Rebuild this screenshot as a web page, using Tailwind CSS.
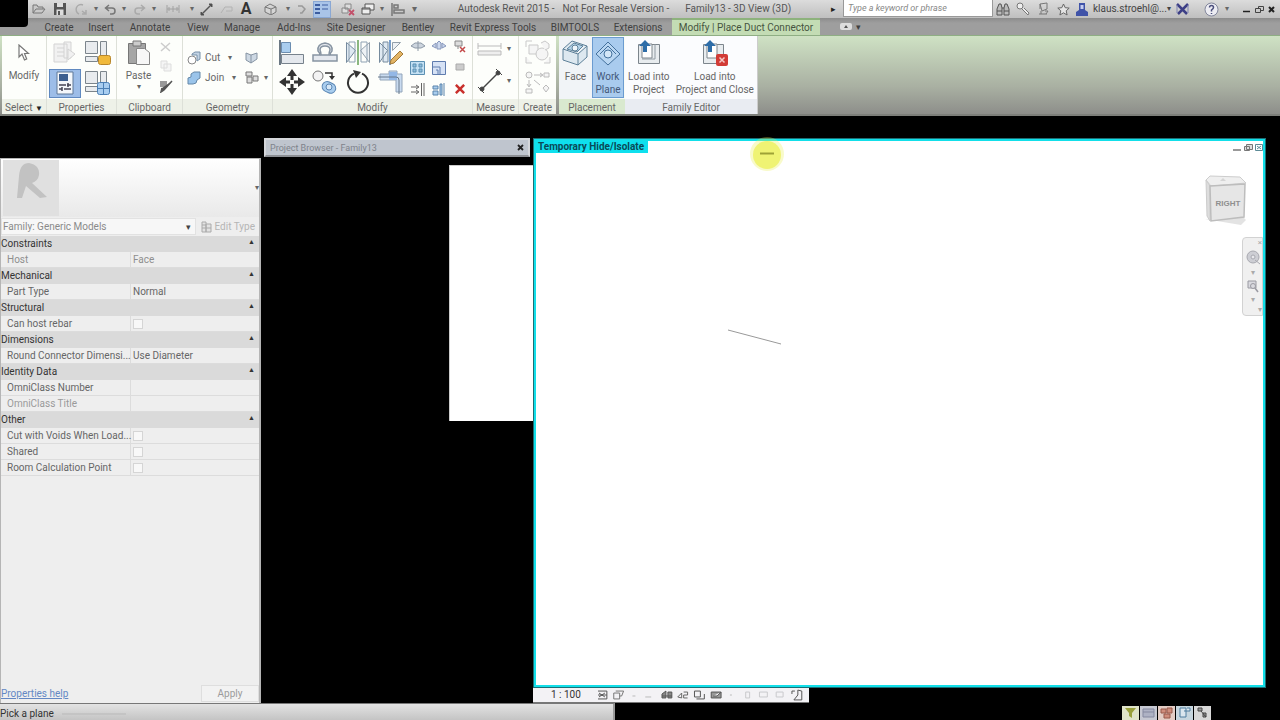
<!DOCTYPE html>
<html lang="en">
  <head>
    <meta charset="UTF-8" />
    <meta name="viewport" content="width=device-width, initial-scale=1.0" />
    <script src="https://cdn.jsdelivr.net/npm/@tailwindcss/browser@4"></script>
    <title>Autodesk Revit 2015</title>
  </head>
  <body
    class="min-h-screen flex flex-col bg-black font-['Roboto','Noto_Sans',sans-serif] text-[10px] leading-4 text-[#666] overflow-hidden"
  >
    <!-- Title bar -->
    <header class="bg-[#9b9b9b]">
      <div class="flex">
        <div class="w-7 h-[27px] -mb-[9px] bg-black rounded-br-sm shrink-0 z-10"></div>
        <div class="flex-1 h-[18px] flex items-center bg-linear-to-b from-[#dcdcdc] to-[#bfbfbf]">
          <nav class="flex items-center h-full shrink-0" aria-label="Quick access">
            <button class="w-[22px] flex justify-center" aria-label="Open">
              <svg width="14" height="12" viewBox="0 0 14 12" fill="#c9c9c9" stroke="#777"><path d="M1 10V2h4l1 2h5v2M1 10l3-4h9l-3 4z" /></svg>
            </button>
            <button class="w-5 flex justify-center" aria-label="Save">
              <svg width="12" height="12" viewBox="0 0 12 12"><path d="M0 0h12v12H0z" fill="#555" /><path d="M3 0h6v4H3zM2.5 6.500h7V12h-7z" fill="#ddd" /><path d="M4 8h2v4H4z" fill="#555" /></svg>
            </button>
            <button class="w-[22px] flex justify-center" aria-label="Synchronize">
              <svg width="14" height="13" viewBox="0 0 14 13" fill="none" stroke="#aaa" stroke-width="1.500"><path d="M9 2a4.500 4.500 0 1 0-4 9M8 8l4 3m0-4v4H8" /></svg>
            </button>
            <span class="w-2 text-[8px] text-center">▾</span>
            <button class="w-5 flex justify-center" aria-label="Undo">
              <svg width="13" height="11" viewBox="0 0 13 11" fill="none" stroke="#777" stroke-width="1.500"><path d="M5 1L1.500 4 5 7M2 4h6a3 3 0 0 1 0 6H6" /></svg>
            </button>
            <span class="w-2 text-[8px] text-center">▾</span>
            <button class="w-[22px] flex justify-center" aria-label="Redo">
              <svg width="13" height="11" viewBox="0 0 13 11" fill="none" stroke="#aaa" stroke-width="1.500"><path d="M8 1l3.500 3L8 7M11 4H5a3 3 0 0 0 0 6h2" /></svg>
            </button>
            <span class="w-2 text-[8px] text-center">▾</span>
            <button class="w-[30px] flex justify-center" aria-label="Align dimension">
              <svg width="14" height="8" viewBox="0 0 14 8" fill="none" stroke="#a2a2a2"><path d="M1 0v8M13 0v8M1 4h12M7 1v6M3 2v4M11 2v4" /></svg>
            </button>
            <span class="w-2 text-[8px] text-center">▾</span>
            <button class="w-5 flex justify-center" aria-label="Measure">
              <svg width="13" height="13" viewBox="0 0 13 13" stroke="#555" fill="#444"><path d="M2 11L11 2" stroke-width="1.500" /><path d="M1 9l3 3H1zM9 1h3v3z" /></svg>
            </button>
            <button class="w-5 flex justify-center" aria-label="Tag">
              <svg width="13" height="10" viewBox="0 0 13 10" fill="none" stroke="#b2b2b2"><path d="M1 9l4-6h7v4H6" /></svg>
            </button>
            <button class="w-5 text-base leading-4 font-bold text-[#333]" aria-label="Text">A</button>
            <button class="w-7 flex justify-center" aria-label="Default 3D view">
              <svg width="13" height="12" viewBox="0 0 13 12" fill="#d5d5d5" stroke="#777"><path d="M1 4l5-3 6 3v5l-5 3-6-3zM1 4l6 2 5-2M7 6v6" /></svg>
            </button>
            <span class="w-2 text-[8px] text-center">▾</span>
            <button class="w-5 flex justify-center" aria-label="Section">
              <svg width="10" height="12" viewBox="0 0 10 12" fill="none" stroke="#999" stroke-width="1.500"><path d="M1 3h4l3 3-3 4H3" /></svg>
            </button>
            <button class="w-[18px] mx-px h-[17px] bg-[#a9c4e8] border border-[#8aa8d4] flex items-center justify-center" aria-label="Thin lines">
              <svg width="14" height="12" viewBox="0 0 14 12" fill="#3c5da0"><path d="M0 1h5v2H0zM0 5h5v2H0zM0 9h5v2H0zM7 1.500h6v1H7zM7 5.500h6v1H7z" /></svg>
            </button>
            <button class="w-5 ml-1.5 flex justify-center" aria-label="Close hidden windows">
              <svg width="14" height="13" viewBox="0 0 14 13" fill="#ddd" stroke="#888"><path d="M4 1h6v5H4zM1 5h6v5H1z" /><path d="M8 7l5 5M13 7l-5 5" stroke="#c2506a" stroke-width="1.800" /></svg>
            </button>
            <button class="w-5 flex justify-center" aria-label="Switch windows">
              <svg width="14" height="13" viewBox="0 0 14 13" fill="#eee" stroke="#555"><path d="M4 1h9v6H4z" /><path d="M1 5h8v6H1zM1 6h8" /></svg>
            </button>
            <span class="w-2 text-[8px] text-center">▾</span>
            <button class="w-6 flex justify-center" aria-label="Align">
              <svg width="14" height="13" viewBox="0 0 14 13" fill="none" stroke="#777" stroke-width="1.500"><path d="M1 0v13M3 2h4v3H3zM3 7h10v3H3z" /></svg>
            </button>
            <span class="w-2 text-[10px] text-center">▾</span>
          </nav>
          <h1 class="flex-1 flex justify-center gap-2 whitespace-nowrap text-[#555]">
            <span>Autodesk Revit 2015 -</span><span>Not For Resale Version -</span><span class="pl-2">Family13 - 3D View (3D)</span>
          </h1>
          <div class="flex items-center h-full shrink-0">
            <span class="w-3 text-[9px] text-[#222]">▸</span>
            <input
              type="text"
              aria-label="Search"
              placeholder="Type a keyword or phrase"
              class="w-[150px] h-[17px] mb-px bg-white border border-t-0 border-[#999] px-1 text-[9px] italic placeholder:text-[#888]"
            />
            <button class="w-5 flex justify-center" aria-label="Find">
              <svg width="14" height="14" viewBox="0 0 14 14" fill="#bbb" stroke="#555"><path d="M1 13V7l2-5h2l1 4v7zM8 13V6l1-4h2l2 5v6zM6 6h2M1 9h5M8 9h5" /></svg>
            </button>
            <button class="w-5 flex justify-center" aria-label="Subscription">
              <svg width="14" height="14" viewBox="0 0 14 14" fill="#eee" stroke="#777"><circle cx="4" cy="4" r="3" /><path d="M6 7l6 6 1-2-5-5" /></svg>
            </button>
            <button class="w-5 flex justify-center" aria-label="Communication center">
              <svg width="13" height="14" viewBox="0 0 13 14" fill="none" stroke="#777"><path d="M3 2l7-1v6l-5 2zM2 12h8M4 12V9M9 12l2-3H8M3 2v5" /></svg>
            </button>
            <button class="w-5 flex justify-center" aria-label="Favorites">
              <svg width="13" height="13" viewBox="0 0 13 13" fill="#e5e5e5" stroke="#666"><path d="M6.500 1l1.700 3.700 4 .4-3 2.700.9 4.200-3.600-2.200L2.900 12l.9-4.200-3-2.700 4-.4z" /></svg>
            </button>
            <button class="w-[94px] flex items-center pl-0.5 text-[#444] whitespace-nowrap">
              <svg class="mr-1 shrink-0" width="14" height="14" viewBox="0 0 14 14"><path d="M4 1h6v7l3 2v4H1v-4l3-2z" fill="#4053a8" /><path d="M5.500 3h3v4h-3z" fill="#c5cdf0" /></svg>
              klaus.stroehl@...
              <span class="text-[8px]">▾</span>
            </button>
            <button class="w-[30px] flex justify-center" aria-label="Exchange">
              <svg width="13" height="12" viewBox="0 0 13 12" stroke-width="2.500" fill="none"><path d="M1 1l10 10M12 1L2 11" stroke="#3d3f86" /><path d="M1 2v8M12 2v8" stroke="#7f83b5" stroke-width="1" /></svg>
            </button>
            <button class="w-7 flex justify-center" aria-label="Help">
              <svg width="15" height="15" viewBox="0 0 15 15" fill="#ececf2" stroke="#83879c"><circle cx="7.500" cy="7.500" r="6.500" /><path d="M5.500 5.500q0-2 2-2t2 2q0 1-2 2.500v1.500M7.500 11v1" fill="none" stroke="#4b4f7c" stroke-width="1.500" /></svg>
            </button>
            <span class="w-3.5 text-[8px]">▾</span>
            <div class="flex gap-1 px-1">
              <button aria-label="Minimize"><svg width="8" height="9" viewBox="0 0 8 9" stroke="#222" stroke-width="1.500"><path d="M0 6.500h7" /></svg></button>
              <button aria-label="Restore"><svg width="9" height="9" viewBox="0 0 9 9" fill="none" stroke="#444"><path d="M3.500 3V1.500h5v4H6M.5 3.500h5v4h-5z" /></svg></button>
              <button aria-label="Close"><svg width="8" height="9" viewBox="0 0 8 9" stroke="#222" stroke-width="2"><path d="M1 2l5 5M6 2L1 7" /></svg></button>
            </div>
          </div>
        </div>
      </div>

      <!-- Ribbon tabs -->
      <nav class="flex h-[18px] pl-[38px] border-b border-[#8fae84] text-[#404040] bg-linear-to-b from-[#8c8c8c] to-[#9e9e9e] to-30% [&>button]:shrink-0 [&>button]:leading-5 whitespace-nowrap" aria-label="Ribbon tabs">
        <button class="w-[42px]">Create</button>
        <button class="w-[42px]">Insert</button>
        <button class="w-14">Annotate</button>
        <button class="w-10">View</button>
        <button class="w-12">Manage</button>
        <button class="w-14">Add-Ins</button>
        <button class="w-[68px]">Site Designer</button>
        <button class="w-14">Bentley</button>
        <button class="w-[94px]">Revit Express Tools</button>
        <button class="w-[70px]">BIMTOOLS</button>
        <button class="w-14">Extensions</button>
        <button class="w-[148px] ml-1.5 bg-[#c3dcb4] border-t-2 border-[#8db27c] text-[#46543f] leading-4!">Modify | Place Duct Connector</button>
        <button class="flex items-center gap-1 ml-5 text-[9px]" aria-label="Ribbon display">
          <svg width="12" height="7" viewBox="0 0 12 7"><rect width="12" height="7" rx="2" fill="#ddd" /><path d="M4 5l2-3 2 3z" fill="#555" /></svg>▾
        </button>
      </nav>

      <!-- Ribbon panels -->
      <div class="flex h-20 pl-0.5 border-b-2 border-[#7d7f7a] bg-linear-to-b from-[#cfe2c4] via-[#a9b0a2] via-65% to-[#8d8e8a] whitespace-nowrap [&>section]:shrink-0 [&_h2]:h-[15px] [&_h2]:leading-[17px] [&_h2]:text-center">
        <section class="w-[45px] flex flex-col bg-[#fdfefb] border-r border-[#dde0d8]">
          <button class="flex-1 flex flex-col items-center pt-2">
            <svg width="12" height="18" viewBox="0 0 12 18" fill="#fff" stroke="#777" stroke-width="1.200"><path d="M1 1v12l3-3 2.500 6 2.200-1L6.500 9.500h4z" /></svg>
            <span class="pt-1.5">Modify</span>
          </button>
          <h2 class="bg-[#eef1e8]">Select <span class="text-[8px] text-[#222]">▼</span></h2>
        </section>
        <section class="w-[70px] flex flex-col bg-[#fdfefb] border-r border-[#dde0d8]">
          <div class="flex-1 grid grid-cols-2 place-items-center px-0.5 pt-0.5">
            <button aria-label="Family category">
              <svg width="26" height="26" viewBox="0 0 26 26" fill="#f1f1f1" stroke="#d3d3d3"><path d="M2 4h13v18H2zM5 8h7M5 12h7M5 16h7M12 2h7v16h-7z" /><path d="M16 9l7 5-7 6z" /></svg>
            </button>
            <button aria-label="Family types">
              <svg width="28" height="26" viewBox="0 0 28 26"><path d="M1.500 1.500h12v12h-12zM16.500 1.500h6v18h-6zM1.500 16.500h12v5h-12z" fill="#e8ebee" stroke="#7c858c" /><rect x="14.500" y="15.500" width="12" height="9" rx="2" fill="#f0b93c" stroke="#b8862b" /></svg>
            </button>
            <button class="w-8 h-[29px] bg-[#9dbde8] border border-[#6089c0] flex items-center justify-center" aria-label="Properties">
              <svg width="18" height="24" viewBox="0 0 18 24"><path d="M1 1h16v22H1z" fill="#f4f7fb" stroke="#5e7898" /><path d="M3 3h9v7H3z" fill="#3d5f90" /><path d="M3 14h7M11 14h4M3 18h3M8 18h7M12 12v4M6 16v4" stroke="#445" stroke-width="1.500" /></svg>
            </button>
            <button aria-label="Family types table">
              <svg width="28" height="26" viewBox="0 0 28 26"><path d="M1.500 1.500h12v12h-12zM16.500 1.500h6v18h-6zM1.500 16.500h12v5h-12z" fill="#e8ebee" stroke="#7c858c" /><rect x="13.500" y="12.500" width="12" height="12" rx="2" fill="#a8cdf0" stroke="#4b7fb5" /><path d="M19.500 13v11M14 18.500h11" stroke="#4b7fb5" /></svg>
            </button>
          </div>
          <h2 class="bg-[#eef1e8]">Properties</h2>
        </section>
        <section class="w-[66px] flex flex-col bg-[#fdfefb] border-r border-[#dde0d8]">
          <div class="flex-1 flex justify-center gap-2">
            <button class="flex flex-col items-center pt-1">
              <svg width="24" height="26" viewBox="0 0 24 26"><path d="M1.500 3.500h17v20h-17z" fill="#a5a5a5" stroke="#777" /><path d="M6 1h8v5H6z" fill="#ccc" stroke="#777" /><path d="M9.500 8.500h8l5 4v12h-13z" fill="#f7f7f7" stroke="#888" /></svg>
              <span class="pt-0.5">Paste</span>
              <span class="text-[8px] leading-[5px]">▾</span>
            </button>
            <div class="flex flex-col justify-between items-center py-1.5">
              <button aria-label="Cut to clipboard"><svg width="12" height="10" viewBox="0 0 12 10" stroke="#ccc" stroke-width="1.500"><path d="M1 1l9 8M10 1L1 9" /></svg></button>
              <button aria-label="Copy to clipboard"><svg width="12" height="12" viewBox="0 0 12 12" fill="#f5f5f5" stroke="#ddd"><path d="M1 1h6v7H1zM4 4h7v7H4z" /></svg></button>
              <button aria-label="Match type"><svg width="14" height="14" viewBox="0 0 14 14"><path d="M1 2h7v6H1z" fill="#999" /><path d="M13 2L5 11l-3 2 1-4" fill="#555" stroke="#555" stroke-width="1.500" /></svg></button>
            </div>
          </div>
          <h2 class="bg-[#eef1e8]">Clipboard</h2>
        </section>
        <section class="w-[90px] flex flex-col bg-[#fdfefb] border-r border-[#dde0d8]">
          <div class="flex-1 grid grid-cols-[54px_1fr] content-center gap-y-1 pl-1 [&>button]:flex [&>button]:items-center [&>button]:gap-1">
            <button>
              <svg width="14" height="14" viewBox="0 0 14 14"><circle cx="5" cy="9" r="4" fill="#fff" stroke="#888" /><path d="M5 3l3-2h5v7l-3 2V4H5z" fill="#c2d3e4" stroke="#7790a8" /></svg>
              Cut <span class="pl-1 text-[8px]">▾</span>
            </button>
            <button aria-label="Wall opening" class="pl-1"><svg width="14" height="14" viewBox="0 0 14 14" fill="#cdd8e3" stroke="#8694a3"><path d="M1 2l5 2v8L1 9zM6 4l6-2v6l-6 4" /></svg></button>
            <button>
              <svg width="14" height="14" viewBox="0 0 14 14" fill="#9ac4ea" stroke="#6488a8"><path d="M1 7l3-1V3l3-2h6v6l-3 2-1 3-3 1H1z" /></svg>
              Join <span class="pl-1 text-[8px]">▾</span>
            </button>
            <button aria-label="Split face" class="pl-1"><svg width="15" height="14" viewBox="0 0 15 14" fill="#ddd" stroke="#777"><path d="M1 1h6v4H1zM2 6h5v6H2zM8 5h5v5H8z" /></svg><span class="text-[8px]">▾</span></button>
          </div>
          <h2 class="bg-[#eef1e8]">Geometry</h2>
        </section>
        <section class="w-[200px] flex flex-col bg-[#fdfefb] border-r border-[#dde0d8]">
          <div class="flex-1 flex items-center">
            <div class="grid grid-cols-4 w-[134px] pl-0.5 gap-y-1 place-items-center">
              <button aria-label="Align"><svg width="26" height="25" viewBox="0 0 26 25"><path d="M1 0v25" stroke="#6b7884" stroke-width="2" /><path d="M2.500 2.500h9v10h-9z" fill="#a9cdee" stroke="#6b8db0" /><path d="M2.500 14.500h22v9h-22z" fill="#e4e8ed" stroke="#77828c" /></svg></button>
              <button aria-label="Offset"><svg width="26" height="25" viewBox="0 0 26 25" fill="none" stroke="#8794a2" stroke-width="1.500"><path d="M1 15h7q0-2-2-4-1-7 7-8 8 1 7 8-2 2-2 4h7v6H1z" fill="#e4e8ee" /><path d="M9 15q0-3-1-5 0-4 5-4t5 4q-1 2-1 5z" fill="#fdfefb" /></svg></button>
              <button aria-label="Mirror pick axis"><svg width="26" height="25" viewBox="0 0 26 25"><path d="M1.500 2.500l9 8-9 12z" fill="#dfe9f2" stroke="#768b9e" /><path d="M24.500 2.500l-9 8 9 12z" fill="#eef2f5" stroke="#93a0ab" /><path d="M4 2h6v20H4zM16 2h6v20h-6z" fill="none" stroke="#8fa2b3" /><path d="M13 0v25" stroke="#65a057" stroke-width="1.500" /></svg></button>
              <button aria-label="Mirror draw axis"><svg width="26" height="25" viewBox="0 0 26 25"><path d="M1.500 2.500l8 8-8 12zM5 2h5v20H5z" fill="#dfe9f2" stroke="#768b9e" /><path d="M22.500 2.500l-8 8v-8z" fill="#eef2f5" stroke="#93a0ab" /><path d="M12 0v25" stroke="#4d7fbd" stroke-width="1.500" /><path d="M22 11l3 3-9 9-4 1 1-4z" fill="#e2b464" stroke="#a37a38" /></svg></button>
              <button aria-label="Move"><svg width="26" height="26" viewBox="0 0 26 26" fill="#333"><path d="M13 0l5 7h-3.500v4h-3V7H8zM13 26l5-7h-3.500v-4h-3v4H8zM0 13l7-5v3.500h4v3H7V18zM26 13l-7-5v3.500h-4v3h4V18z" /></svg></button>
              <button aria-label="Copy"><svg width="26" height="26" viewBox="0 0 26 26"><circle cx="6" cy="7" r="5" fill="#f3f3f3" stroke="#777" /><path d="M13 4h7v4" fill="none" stroke="#333" stroke-width="1.500" /><path d="M17 7h6l-3 4z" fill="#333" /><rect x="10" y="13" width="14" height="10" rx="5" transform="rotate(25 16 18)" fill="#a9cdee" stroke="#5b87b5" /><circle cx="17" cy="18" r="3" fill="#d5e7f7" stroke="#5b87b5" /></svg></button>
              <button aria-label="Rotate"><svg width="26" height="26" viewBox="0 0 26 26"><path d="M9 4.600A10 10 0 1 0 17 4.600" fill="none" stroke="#333" stroke-width="2" /><path d="M8 1l8 2-5 6z" fill="#333" /></svg></button>
              <button aria-label="Trim"><svg width="26" height="26" viewBox="0 0 26 26"><path d="M2 5h9V2h8v3h5v18h-6V11H2z" fill="#c9dbf0" stroke="#93a5ba" /><path d="M11 3h8v8h-8z" fill="#93b7e6" /><path d="M0 8h18q3 0 3 3v14" fill="none" stroke="#66788c" /></svg></button>
            </div>
            <div class="grid grid-cols-3 w-[64px] gap-y-2 place-items-center">
              <button aria-label="Split"><svg width="14" height="12" viewBox="0 0 14 12" fill="#cdd5de" stroke="#8d99a6"><path d="M0 6l4-3h6l4 3-4 2H4zM7 1v10" /></svg></button>
              <button aria-label="Split with gap"><svg width="14" height="12" viewBox="0 0 14 12" fill="#cdd9ee" stroke="#8797bb"><path d="M0 6l4-3v5zM14 6l-4-3v5zM5 3l2-2 2 2v6H5z" /></svg></button>
              <button aria-label="Unpin"><svg width="12" height="13" viewBox="0 0 12 13" fill="#ddd" stroke="#888"><path d="M1 1h7v5H1zM4 6v3" /><path d="M6 7l5 5M11 7l-5 5" stroke="#c44a4a" stroke-width="1.500" /></svg></button>
              <button aria-label="Array"><svg width="15" height="14" viewBox="0 0 15 14" fill="#c3e0f3" stroke="#5c90b2"><path d="M.5.5h14v13H.5z" /><path d="M3 3h3v3H3zM9 3h3v3H9zM3 8h3v3H3zM9 8h3v3H9z" fill="#8dbedd" /></svg></button>
              <button aria-label="Scale"><svg width="14" height="14" viewBox="0 0 14 14" fill="#d6e2f5" stroke="#5f7cae"><path d="M.5.5h13v13H.5zM1 6h7v7M4 9h2v4" /></svg></button>
              <button aria-label="Pin"><svg width="10" height="9" viewBox="0 0 10 9" fill="#ccc" stroke="#aaa"><path d="M1 1h8v6H1z" /></svg></button>
              <button aria-label="Trim single"><svg width="14" height="13" viewBox="0 0 14 13" fill="none" stroke="#666"><path d="M0 4h7M0 9h7M5 2l3 2-3 2M5 7l3 2-3 2M10.500 0v13M13 0v13" /></svg></button>
              <button aria-label="Trim multiple"><svg width="14" height="13" viewBox="0 0 14 13" fill="#a9cdee" stroke="#5883ab"><path d="M1 3h5v3H1zM1 8h5v4H1zM8 1h2v11H8zM12 0v13" /></svg></button>
              <button aria-label="Delete"><svg width="10" height="10" viewBox="0 0 12 12" stroke="#c9302c" stroke-width="3"><path d="M1 1l10 10M11 1L1 11" /></svg></button>
            </div>
          </div>
          <h2 class="bg-[#eef1e8]">Modify</h2>
        </section>
        <section class="w-[46px] flex flex-col bg-[#fdfefb] border-r border-[#dde0d8]">
          <div class="flex-1 flex flex-col justify-around px-1">
            <button class="flex items-center gap-1" aria-label="Aligned dimension"><svg width="26" height="16" viewBox="0 0 26 16" fill="#eee" stroke="#bbb"><path d="M1 2v6M24 2v6M1 5h23M1 10h23v4H1z" /></svg><span class="text-[8px]">▾</span></button>
            <button class="flex items-center gap-1" aria-label="Measure between"><svg width="26" height="26" viewBox="0 0 26 26" fill="#444" stroke="#444"><path d="M4 22L22 4" stroke-width="1.500" /><path d="M1 19l6 6M19 1l6 6" /><circle cx="5" cy="21" r="2" /><circle cx="21" cy="5" r="2" /></svg><span class="text-[8px]">▾</span></button>
          </div>
          <h2 class="bg-[#eef1e8]">Measure</h2>
        </section>
        <section class="w-[37px] flex flex-col bg-[#fdfefb]">
          <div class="flex-1 flex flex-col justify-around items-center">
            <button aria-label="Create group"><svg width="26" height="24" viewBox="0 0 26 24" fill="#f5f5f5" stroke="#c9c9c9"><path d="M1 1h6M1 1v6M25 17v6h-6M1 17v6h6M4 5h9v9H4z" /><circle cx="17" cy="14" r="6" /><path d="M16 3l4-2 4 3v4l-4 2" /></svg></button>
            <button aria-label="Create similar"><svg width="26" height="24" viewBox="0 0 26 24" fill="#f5f5f5" stroke="#bbb"><circle cx="4" cy="4" r="3" /><path d="M9 4h8M15 2l3 2-3 2M4 9v6M2 13l2 3 2-3M1 18h6v4H1zM9 9l6 5M19 2h5v4h-5zM21 14l3 3-3 4-3-4z" /></svg></button>
          </div>
          <h2 class="bg-[#eef1e8]">Create</h2>
        </section>
        <section class="w-[66px] ml-[3px] flex flex-col bg-[#f8fbf6]">
          <div class="flex-1 flex">
            <button class="w-[33px] flex flex-col items-center pt-1 leading-[13px] bg-[#f1f4f7]">
              <svg width="27" height="26" viewBox="0 0 27 26" fill="#dde8f0" stroke="#5d8098"><path d="M1 9l9-8 15 5v11l-9 8-15-5zM1 9l15 5 9-8M16 14v11" /><path d="M5 9l7-6 9 3-6 6z" fill="#b4d4ea" /><circle cx="13" cy="8" r="3" fill="#eef5fa" /></svg>
              <span class="pt-1">Face</span>
            </button>
            <button class="w-8 h-[61px] mt-px flex flex-col items-center pt-[3px] leading-[13px] bg-[#a9cbee] border border-[#6b9bd0] text-[#44597a]">
              <svg class="shrink-0" width="26" height="26" viewBox="0 0 26 26" fill="#b9d6f2" stroke="#44719d"><path d="M13 1l12 12-12 11L1 13zM5 13l8-8 8 8" /><circle cx="13" cy="13" r="4" fill="#d3e6f7" /></svg>
              <span class="pt-[3px]">Work<br />Plane</span>
            </button>
          </div>
          <h2 class="bg-[#d9e9cf]">Placement</h2>
        </section>
        <section class="w-[133px] flex flex-col bg-[#fbfcfe] border-r border-[#ccc]">
          <div class="flex-1 flex justify-around">
            <button class="flex flex-col items-center pt-1 leading-[13px]">
              <svg width="24" height="26" viewBox="0 0 24 26"><path d="M1.500 4.500h21v19h-21z" fill="#e8ecef" stroke="#7c858c" /><path d="M5 4h10v14H5z" fill="#fff" stroke="#7c858c" /><path d="M18 4v15H5" fill="none" stroke="#909aa2" /><path d="M8 0l6 6h-4v6H6V6H2z" fill="#2e6da8" /></svg>
              <span class="pt-1">Load into<br />Project</span>
            </button>
            <button class="flex flex-col items-center pt-1 leading-[13px]">
              <svg width="26" height="26" viewBox="0 0 26 26"><path d="M1.500 4.500h20v19h-20z" fill="#e8ecef" stroke="#7c858c" /><path d="M5 4h10v14H5z" fill="#fff" stroke="#7c858c" /><path d="M8 0l6 6h-4v6H6V6H2z" fill="#2e6da8" /><rect x="14" y="14" width="12" height="12" rx="2" fill="#d23b36" /><path d="M17.500 17.500l5 5m0-5l-5 5" stroke="#f5c9c7" stroke-width="1.500" /></svg>
              <span class="pt-1">Load into<br />Project and Close</span>
            </button>
          </div>
          <h2 class="bg-[#e9ecf2]">Family Editor</h2>
        </section>
      </div>
    </header>

    <!-- Workspace -->
    <main class="flex-1 flex">
      <!-- Properties palette -->
      <aside class="w-[261px] shrink-0 mt-[42px] flex flex-col bg-[#eeeeee] border-l border-r-2 border-t border-[#b5b5b5]">
        <div class="h-[58px] flex items-center justify-between bg-linear-to-b from-white to-[#e9e9e9] pl-0.5">
          <svg width="56" height="56" viewBox="0 0 56 56"><path d="M0 0h56v56H0z" fill="#e0e0e0" /><path d="M14 38l2-22q1-13 10-13 11 2 10 12-1 6-7 8l15 14-7 1-14-12-4 12z" fill="#c2c2c2" /></svg>
          <span class="text-[8px]">▾</span>
        </div>
        <div class="h-[19px] flex items-center">
          <select class="w-[195px] h-[17px] bg-[#f7f7f7] border border-[#e2e2e2] appearance-none text-[#8a8a8a] leading-[15px] pl-px" aria-label="Type">
            <option>Family: Generic Models</option>
          </select>
          <span class="-ml-2.5 text-[9px] text-[#444] pointer-events-none">▾</span>
          <button class="flex-1 flex items-center justify-end gap-0.5 pr-1 text-[#b5b5b5] whitespace-nowrap">
            <svg width="12" height="12" viewBox="0 0 12 12" fill="#e2e2e2" stroke="#aaa"><path d="M1 1h4v10H1zM5 3h5v8H5zM1 4h4M1 7h9" /></svg>
            Edit Type
          </button>
        </div>
        <table class="w-full table-fixed border-separate border-spacing-0 text-left [&_tr]:h-4 [&_th]:p-0 [&_td]:p-0 [&_td]:border-b [&_td]:border-[#dcdcdc] [&_td]:leading-[15px] [&_td]:whitespace-nowrap [&_td:first-child]:border-r [&_td:first-child]:pl-1.5 [&_td:last-child]:pl-0.5 [&_th]:font-normal [&_th]:bg-[#dadada] [&_th]:text-[#333] [&_th_span]:float-right [&_th_span]:pr-1 [&_th_span]:text-[7px] [&_th_span]:leading-3 [&_input]:appearance-none [&_input]:size-2.5 [&_input]:bg-[#f8f8f8] [&_input]:border [&_input]:border-[#d5d5d5] [&_input]:block">
          <colgroup>
            <col class="w-[130px]" />
            <col />
          </colgroup>
          <tbody>
            <tr><th colspan="2">Constraints<span>▲</span></th></tr>
            <tr class="text-[#8f8f8f]"><td>Host</td><td>Face</td></tr>
            <tr><th colspan="2">Mechanical<span>▲</span></th></tr>
            <tr><td>Part Type</td><td>Normal</td></tr>
            <tr><th colspan="2">Structural<span>▲</span></th></tr>
            <tr><td><label for="rebar">Can host rebar</label></td><td><input type="checkbox" id="rebar" /></td></tr>
            <tr><th colspan="2">Dimensions<span>▲</span></th></tr>
            <tr><td>Round Connector Dimensi...</td><td>Use Diameter</td></tr>
            <tr><th colspan="2">Identity Data<span>▲</span></th></tr>
            <tr><td>OmniClass Number</td><td></td></tr>
            <tr class="text-[#9a9a9a]"><td>OmniClass Title</td><td></td></tr>
            <tr><th colspan="2">Other<span>▲</span></th></tr>
            <tr><td><label for="voids">Cut with Voids When Load...</label></td><td><input type="checkbox" id="voids" /></td></tr>
            <tr><td><label for="shared">Shared</label></td><td><input type="checkbox" id="shared" /></td></tr>
            <tr><td><label for="room">Room Calculation Point</label></td><td><input type="checkbox" id="room" /></td></tr>
          </tbody>
        </table>
        <div class="mt-auto h-[19px] flex items-center justify-between">
          <a href="#" class="underline text-[#6488c4]">Properties help</a>
          <button class="w-[58px] h-[17px] leading-[15px] border border-[#dedede] bg-[#f2f2f2] text-[#9b9b9b]">Apply</button>
        </div>
      </aside>

      <!-- Project browser -->
      <section class="w-[269px] shrink-0 pl-[3px] mt-[22px] flex flex-col">
        <div class="h-[19px] w-[266px] flex items-center justify-between px-1 bg-[#bfc5ce] border-2 border-[#d4d6da] border-b-[#8c8f94] text-[9px] text-[#7e838b]">
          <h2>Project Browser - Family13</h2>
          <button aria-label="Close project browser"><svg width="7" height="7" viewBox="0 0 7 7" stroke="#222" stroke-width="1.800"><path d="M1 1l5 5M6 1L1 6" /></svg></button>
        </div>
        <div class="w-[84px] h-64 mt-2 ml-auto -mr-[3px] bg-white border-t border-l border-[#ccc]"></div>
      </section>

      <!-- 3D view -->
      <section class="flex-1 ml-[3px] mr-[14px] mt-[22px] flex flex-col">
        <div class="relative flex-1 bg-white border-[3px] border-[#12dfe9] outline outline-[#1b6f76] -outline-offset-1">
          <div class="flex justify-between items-start">
            <span class="w-28 h-3 bg-[#0ee0ee] pl-0.5 text-[10px] leading-3 font-bold text-[#0a4a58] whitespace-nowrap">Temporary Hide/Isolate</span>
            <div class="flex gap-0.5 pt-0.5">
              <button aria-label="Minimize view"><svg width="9" height="9" viewBox="0 0 9 9" stroke="#777" stroke-width="1.500"><path d="M0 7h8" /></svg></button>
              <button aria-label="Restore view"><svg width="9" height="9" viewBox="0 0 9 9" fill="#ddd" stroke="#777"><path d="M2.500 1.500h6v5h-6zM.5 3.500h5v4h-5z" /></svg></button>
              <button aria-label="Close view"><svg width="8" height="9" viewBox="0 0 8 9" fill="none" stroke="#5d8a96"><path d="M.5 1.500h7v6h-7zM2 3l4 3M6 3L2 6" /></svg></button>
            </div>
          </div>
          <svg class="absolute left-[214px] -top-1" width="34" height="34" viewBox="0 0 34 34"><circle cx="17" cy="17" r="17" fill="#e9f050" opacity=".3" /><circle cx="17" cy="18" r="14" fill="#ebf04e" opacity=".7" /><path d="M10 16.500h14" stroke="#9ea236" stroke-width="2" /></svg>
          <svg class="absolute left-48 top-[188px]" width="56" height="18" viewBox="0 0 56 18"><path d="M0 1l53 14" stroke="#999" /></svg>
          <svg class="absolute right-3.5 top-8" width="46" height="54" viewBox="0 0 46 54">
            <path d="M2 46l36 6 5-5-3-3z" fill="#e3e3e3" />
            <path d="M3 7l4-4 30 1 6 6-35 3z" fill="#efefef" stroke="#cdcdcd" />
            <path d="M17 8l3-3 3 3z" fill="#d5d5d5" />
            <path d="M3 7l4 6v35l-3-5z" fill="#ddd" stroke="#ccc" />
            <path d="M7 13l35-2-1 33-33 4z" fill="#e6e6e6" stroke="#bdbdbd" stroke-width="1.500" />
            <text x="25" y="33" text-anchor="middle" font-family="Liberation Sans" font-size="8" font-weight="bold" fill="#8f8f8f">RIGHT</text>
          </svg>
          <div class="absolute right-0 top-24 w-[21px] h-[79px] rounded-l bg-[#f0f0f0] border border-[#d2d2d2] flex flex-col items-center justify-between py-0.5 text-[8px] leading-[6px] text-[#aaa]">
            <span class="self-end">×</span>
            <button aria-label="Steering wheel"><svg width="16" height="16" viewBox="0 0 16 16" fill="#cdced4" stroke="#a8a9b0"><circle cx="8" cy="7" r="6" /><path d="M10 10l5 4" /><circle cx="8" cy="7" r="2" fill="#e8e8ec" /></svg></button>
            <span>▾</span>
            <button aria-label="Zoom"><svg width="12" height="13" viewBox="0 0 12 13" fill="#d9d9df" stroke="#9a9aa2"><path d="M1 1h8v7H1z" /><circle cx="6" cy="6" r="2.500" /><path d="M8 8l3 4" stroke-width="1.500" /></svg></button>
            <span>▾</span>
            <span class="self-end">▾</span>
          </div>
        </div>
        <!-- View control bar -->
        <div class="w-[276px] h-[15px] flex items-center bg-[#f3f2f5] border-b border-[#777] pl-[18px] pr-1 text-[#333]">
          <button class="w-12 text-left">1 : 100</button>
          <svg width="210" height="12" viewBox="0 0 210 12" fill="none" stroke="#555">
            <path d="M-1 2h10v8H-1zM1 4l6 4M7 4L1 8M-1 6h10" />
            <path d="M16 4h6v6h-6zM18 2h8l-2 5h-2" stroke="#777" />
            <path d="M35 7h3M48 8h6" stroke="#bbb" />
            <path d="M65 9V5l4-3v7zM71 3h4v6h-4zM65 7h10" fill="#888" />
            <path d="M81 8l4-4v5zM87 3h4v3h-4v3h4" stroke="#666" />
            <path d="M98 2h6v6h-6zM100 10h8V5" />
            <path d="M115 3h10v6h-10zM117 7h4l4-4" fill="#999" />
            <path d="M134 6h2" stroke="#bbb" />
            <path d="M150 3h4v6h-4zM164 3h8v5h-8zM181 3h7v5h-7z" stroke="#c9c9cc" />
            <path d="M197 2h3M197 2v3M203 1v5l-4 5h8V2z" />
          </svg>
        </div>
      </section>
    </main>

    <!-- Status bar -->
    <footer class="h-[17px] flex justify-between">
      <div class="w-[615px] flex items-center gap-2 bg-linear-to-b from-[#e3e3e3] to-[#c4c4c4] border-t border-[#777] border-r-2 border-r-[#999] text-[#333]">
        <span class="pt-1">Pick a plane</span>
        <span class="w-16 h-0.5 mt-1 bg-[#c4c4c4]"></span>
      </div>
      <div class="flex gap-px pt-[3px] pr-[69px]">
        <button class="w-[17px] bg-[#dfe3c8] flex justify-center" aria-label="Filter"><svg width="13" height="14" viewBox="0 0 13 14" fill="#99a03c"><path d="M1 2h11L8 7v5l-3-2V7z" /></svg></button>
        <button class="w-[17px] bg-[#c6c8d2] flex justify-center" aria-label="Select links"><svg width="13" height="14" viewBox="0 0 13 14" fill="#aeb2c4" stroke="#8589a0"><path d="M1 3h11v8H1zM1 6h11" /></svg></button>
        <button class="w-[17px] bg-[#e3ccc4] flex justify-center" aria-label="Select pinned"><svg width="13" height="14" viewBox="0 0 13 14" fill="#cf8d7c" stroke="#96584a"><path d="M1 3h5v4H1zM7 2h5v5H7zM4 8h6v4H4z" /></svg></button>
        <button class="w-[17px] bg-[#c6d5de] flex justify-center" aria-label="Select by face"><svg width="13" height="14" viewBox="0 0 13 14" fill="#dbe6ee" stroke="#4f7d9e"><path d="M2 2h6v9H2zM6 5h6V2H9" /></svg></button>
        <button class="w-[17px] bg-[#d8d8d8] flex justify-center" aria-label="Drag on selection"><svg width="13" height="14" viewBox="0 0 13 14" fill="#999" stroke="#444"><path d="M2 2h4v3H2zM5 5l5 6M7 7h3v4H7z" /></svg></button>
      </div>
    </footer>
  </body>
</html>
